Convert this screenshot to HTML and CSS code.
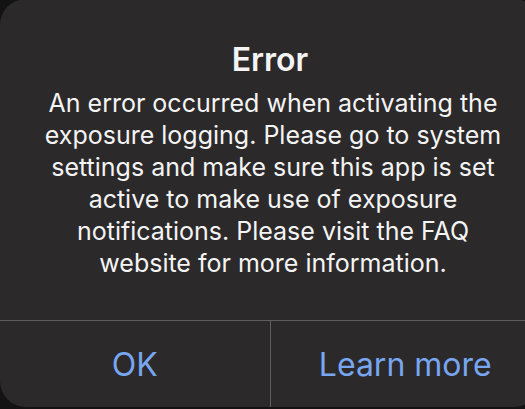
FILE: index.html
```html
<!DOCTYPE html>
<html lang="en">
<head>
    <meta charset="UTF-8">
    <meta name="viewport" content="width=device-width, initial-scale=1.0">
    <title>Error</title>
    <link rel="stylesheet" href="styles.css">
</head>
<body>
    <div class="alert">
        <div class="alert-content">
            <h1 class="alert-title">Error</h1>
            <p class="alert-message">An error occurred when activating the<br>
                exposure logging. Please go to system<br>
                settings and make sure this app is set<br>
                active to make use of exposure<br>
                notifications. Please visit the FAQ<br>
                website for more information.</p>
        </div>
        <div class="alert-actions">
            <button class="alert-button">OK</button>
            <button class="alert-button">Learn more</button>
        </div>
    </div>
</body>
</html>
```

FILE: styles.css
```css
body {
    margin: 0;
    background-color: #141314;
    font-family: Inter, "Noto Sans", sans-serif;
    overflow: hidden;
}

.alert {
    width: 540px;
    height: 408px;
    margin-top: -1px;
    background-color: #2b292a;
    border-radius: 26px;
    display: flex;
    flex-direction: column;
    color: #f4f4f4;
}

.alert-content {
    flex: 1;
    padding: 42px 24px 0 24px;
    text-align: center;
}

.alert-title {
    margin: 0;
    font-size: 32px;
    font-weight: 600;
    line-height: 38px;
}

.alert-message {
    margin: 8px 0 0 0;
    padding-left: 6px;
    font-size: 25px;
    line-height: 32px;
    white-space: nowrap;
}

.alert-actions {
    display: flex;
    border-top: 1px solid #5f5d5e;
    height: 86px;
}

.alert-button {
    flex: 1;
    background: none;
    border: none;
    color: #78a6f0;
    font-family: inherit;
    font-size: 32px;
    padding: 0;
    cursor: pointer;
}

.alert-button + .alert-button {
    border-left: 1px solid #5f5d5e;
}
```
